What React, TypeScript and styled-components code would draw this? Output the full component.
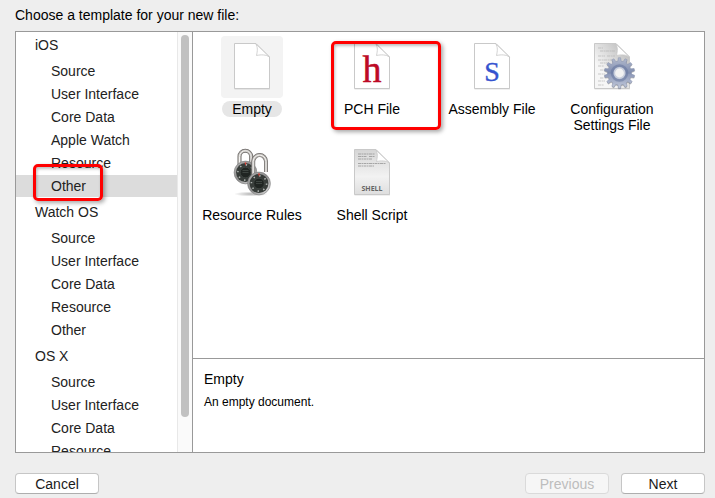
import React from "react";
import styled, { createGlobalStyle, css } from "styled-components";

const GlobalStyle = createGlobalStyle`
  * { box-sizing: border-box; }
  body {
    margin: 0;
    background: #eeeeee;
    color: #000;
    font: 14px/16px "Liberation Sans", Arial, sans-serif;
  }
`;

const Dialog = styled.main`
  display: flex;
  flex-direction: column;
  height: 100vh;
  padding: 7px 10px 4px 15px;
`;

const Title = styled.h1`
  margin: 0 0 8px;
  font-size: 14px;
  line-height: 16px;
  font-weight: 400;
`;

const Panel = styled.div`
  display: flex;
  flex: 1;
  min-height: 0;
  border: 1px solid #999;
  background: #fff;
`;

const Sidebar = styled.nav`
  display: flex;
  flex: none;
  width: 177px;
  overflow: hidden;
  border-right: 1px solid #999;
`;

const Groups = styled.div`
  display: flex;
  flex: 1;
  flex-direction: column;
  gap: 1px;
  color: #222;
`;

const GroupName = styled.h2`
  margin: 0;
  padding: 0 0 2px 19px;
  font-size: 14px;
  line-height: 26px;
  font-weight: 400;
`;

const GroupList = styled.ul`
  margin: 0;
  padding: 0;
  list-style: none;
`;

const GroupItem = styled.li`
  position: relative;
  padding-bottom: 1px;
`;

const Category = styled.button<{ $selected?: boolean }>`
  display: block;
  width: 100%;
  height: 22px;
  padding: 0 0 0 35px;
  border: 0;
  background: ${(p) => (p.$selected ? "#dcdcdc" : "transparent")};
  color: inherit;
  font: inherit;
  text-align: left;
`;

const ScrollTrack = styled.div`
  flex: none;
  width: 15px;
  padding: 3px 3px 35px;
  border-left: 1px solid #e8e8e8;
  background: #fafafa;
`;

const ScrollThumb = styled.div`
  width: 8px;
  height: 100%;
  border-radius: 4px;
  background: #c1c1c1;
`;

const Content = styled.section`
  display: flex;
  flex: 1;
  flex-direction: column;
  min-width: 0;
`;

const Templates = styled.div`
  display: grid;
  flex: 1;
  grid-template-columns: repeat(auto-fill, 120px);
  align-content: start;
  gap: 8px 0;
  padding-top: 4px;
`;

const Cell = styled.div`
  position: relative;
  padding-right: 2px;
`;

const Template = styled.button`
  display: flex;
  flex-direction: column;
  align-items: center;
  gap: 3px;
  width: 100%;
  padding: 0 0 1px;
  border: 0;
  background: none;
  color: #000;
  font: inherit;
`;

const IconTile = styled.span<{ $selected?: boolean }>`
  display: block;
  width: 62px;
  height: 62px;
  border-radius: 4px;
  background: ${(p) => (p.$selected ? "#f3f3f3" : "transparent")};
  svg { display: block; }
`;

const Label = styled.span<{ $selected?: boolean }>`
  min-width: 60px;
  padding: 0 8px;
  border-radius: 9px;
  background: ${(p) => (p.$selected ? "#e6e6e6" : "transparent")};
`;

const markPlace = {
  category: css`
    top: -11px;
    left: 17px;
    width: 70px;
    height: 37px;
  `,
  template: css`
    top: 5px;
    left: 18px;
    width: 110px;
    height: 89px;
  `,
};

const Mark = styled.span<{ $on: "category" | "template" }>`
  position: absolute;
  z-index: 1;
  border: 3px solid #ff0000;
  border-radius: 5px;
  box-shadow: 2px 2px 4px rgba(0, 0, 0, 0.35), inset 1px 2px 3px rgba(0, 0, 0, 0.25);
  pointer-events: none;
  ${(p) => markPlace[p.$on]}
`;

const Detail = styled.div`
  flex: none;
  height: 94px;
  padding: 12px 11px;
  border-top: 1px solid #999;
`;

const DetailTitle = styled.h2`
  margin: 0 0 7px;
  font-size: 14px;
  line-height: 16px;
  font-weight: 400;
`;

const DetailText = styled.p`
  margin: 0;
  font-size: 12px;
  line-height: 16px;
`;

const Footer = styled.footer`
  display: flex;
  gap: 12px;
  padding-top: 20px;
`;

const Button = styled.button<{ $first?: boolean }>`
  width: 84px;
  height: 21px;
  padding: 0;
  border: 1px solid #c6c6c6;
  border-bottom-color: #aeaeae;
  border-radius: 4px;
  background: #fff;
  color: #1a1a1a;
  font: inherit;
  line-height: 18px;
  margin-right: ${(p) => (p.$first ? "auto" : "0")};
  &:disabled {
    border-color: #dadada;
    background: #f6f6f6;
    color: #bdbdbd;
  }
`;

function Page({ fill = "#fff", id }: { fill?: string; id: string }) {
  return (
    <>
      <defs>
        <linearGradient id={id} x1="0" y1="1" x2="1" y2="0">
          <stop offset="0.45" stopColor="#fff" />
          <stop offset="1" stopColor="#bdbdbd" />
        </linearGradient>
      </defs>
      <path d="M13.5 8H35L49 21.5V53.5H13.5Z" fill="#000" opacity="0.12" />
      <path d="M13.5 7.5H35L48.5 21V52.5H13.5Z" fill={fill} stroke="#c9c9c9" />
      <path d="M34.5 7.500C37 11 36.5 15 35.5 19.5C40 18.5 45 18.5 48.5 21Z" fill={`url(#${id})`} stroke="#c6c6c6" strokeWidth="0.8" />
    </>
  );
}

const Svg = ({ children }: { children: React.ReactNode }) => (
  <svg width="62" height="62" viewBox="0 0 62 62" aria-hidden="true">{children}</svg>
);

const EmptyIcon = () => <Svg><Page id="fold-empty" /></Svg>;

const HeaderIcon = () => (
  <Svg>
    <Page id="fold-h" />
    <text x="31" y="46" textAnchor="middle" fontFamily="Liberation Serif, serif" fontSize="38" fill="#bd0a26" stroke="#bd0a26" strokeWidth="0.5">h</text>
  </Svg>
);

const AssemblyIcon = () => (
  <Svg>
    <Page id="fold-s" />
    <text x="31" y="45" textAnchor="middle" fontFamily="Liberation Serif, serif" fontSize="28" fill="#3453cf" stroke="#3453cf" strokeWidth="0.4">S</text>
  </Svg>
);

const TEETH = 14;
const gearPath = Array.from({ length: TEETH }, (_, i) => {
  const step = (Math.PI * 2) / TEETH;
  const points = [[-0.3, 12], [-0.17, 15.3], [0.17, 15.3], [0.3, 12]];
  return points
    .map(([t, r], j) => {
      const a = (i + t) * step;
      return `${i + j === 0 ? "M" : "L"}${(38.5 + r * Math.sin(a)).toFixed(2)} ${(37 - r * Math.cos(a)).toFixed(2)}`;
    })
    .join("");
}).join("") + "ZM43 37A4.5 4.5 0 1 0 34 37A4.5 4.5 0 1 0 43 37Z";

const ConfigIcon = () => (
  <Svg>
    <defs>
      <linearGradient id="config-page" x1="0" y1="1" x2="1" y2="0">
        <stop offset="0.3" stopColor="#f6f6f6" />
        <stop offset="1" stopColor="#b4b4b4" />
      </linearGradient>
      <linearGradient id="gear" x1="0" y1="0" x2="0" y2="1">
        <stop offset="0" stopColor="#b4bccf" />
        <stop offset="0.5" stopColor="#7f8cae" />
        <stop offset="0.55" stopColor="#8f9bba" />
        <stop offset="1" stopColor="#c2c9da" />
      </linearGradient>
    </defs>
    <Page id="fold-config" fill="url(#config-page)" />
    <path d="M17 12h5M19 15h15M17 20h7m2 0h8M17 24h14M19 27h9M17 30h6M19 34h5M17 38h7M19 42h4M17 45h7M17 49h6" stroke="#b4b4b4" strokeWidth="0.7" strokeDasharray="3 0.6 2 0.4" />
    <path d={gearPath} transform="translate(0 1)" fill="#000" opacity="0.25" fillRule="evenodd" />
    <path d={gearPath} fill="url(#gear)" stroke="#8791ab" strokeWidth="0.5" fillRule="evenodd" />
    <circle cx="38.5" cy="37" r="7.5" fill="none" stroke="#66769e" strokeWidth="2.5" opacity="0.55" />
    <circle cx="38.5" cy="37" r="5.2" fill="#f2f2f2" stroke="#c9cfdd" strokeWidth="1.6" />
  </Svg>
);

function Padlock({ x, y, shackle }: { x: number; y: number; shackle: string }) {
  return (
    <g>
      <path d={shackle} fill="none" stroke="#6d6a68" strokeWidth="4" />
      <path d={shackle} fill="none" stroke="#bcb9b5" strokeWidth="2.6" />
      <path d={shackle} fill="none" stroke="#f4f3f1" strokeWidth="1" />
      <circle cx={x} cy={y} r="11.4" fill="url(#metal)" stroke="#777" strokeWidth="0.6" />
      <circle cx={x} cy={y} r="9.4" fill="#373c39" />
      <circle cx={x} cy={y} r="7.6" fill="none" stroke="#b3b8b5" strokeWidth="1.6" strokeDasharray="1.4 4.569" />
      <circle cx={x} cy={y} r="5.3" fill="#202522" stroke="#454c48" strokeWidth="0.7" />
      <path d={`M${x - 3} ${y - 2}h6M${x - 3} ${y}h6`} stroke="#454c48" strokeWidth="0.8" />
      <path d={`M${x - 1} ${y - 10}h2l-1 3z`} fill="#e33b2f" />
    </g>
  );
}

const LocksIcon = () => (
  <Svg>
    <defs>
      <linearGradient id="metal" x1="0" y1="0" x2="1" y2="1">
        <stop offset="0" stopColor="#b5b5b5" />
        <stop offset="0.5" stopColor="#8c8c8c" />
        <stop offset="1" stopColor="#ececec" />
      </linearGradient>
      <radialGradient id="floor">
        <stop offset="0" stopColor="#000" stopOpacity="0.3" />
        <stop offset="1" stopColor="#000" stopOpacity="0" />
      </radialGradient>
    </defs>
    <ellipse cx="30" cy="52" rx="17" ry="2.5" fill="url(#floor)" />
    <Padlock x={24.5} y={30.5} shackle="M18.5 24V14.5A5.8 5.8 0 0 1 30.1 14.5V22" />
    <Padlock x={38} y={41.5} shackle="M32.2 34V19.5A6.4 6.4 0 0 1 45 19.5V30" />
  </Svg>
);

const ShellIcon = () => (
  <Svg>
    <defs>
      <linearGradient id="shell-page" x1="0" y1="0" x2="0" y2="1">
        <stop offset="0" stopColor="#d5d5d5" />
        <stop offset="0.6" stopColor="#f2f2f2" />
        <stop offset="1" stopColor="#dedede" />
      </linearGradient>
    </defs>
    <Page id="fold-shell" fill="url(#shell-page)" />
    <path d="M17 12h17M17 14.5h9m2 0h6M17 17h14M17 21.5h28M17 24h16" stroke="#969696" strokeWidth="0.8" strokeDasharray="3 0.5 1.5 0.5" />
    <text x="31" y="49" textAnchor="middle" fontFamily="Open Sans, sans-serif" fontWeight="700" fontSize="7" fill="#666">SHELL</text>
  </Svg>
);

const groups = [
  { name: "iOS", items: ["Source", "User Interface", "Core Data", "Apple Watch", "Resource", "Other"], selected: "Other" },
  { name: "Watch OS", items: ["Source", "User Interface", "Core Data", "Resource", "Other"] },
  { name: "OS X", items: ["Source", "User Interface", "Core Data", "Resource"] },
];

const templates = [
  { name: "Empty", Icon: EmptyIcon, selected: true },
  { name: "PCH File", Icon: HeaderIcon, marked: true },
  { name: "Assembly File", Icon: AssemblyIcon },
  { name: "Configuration Settings File", Icon: ConfigIcon },
  { name: "Resource Rules", Icon: LocksIcon },
  { name: "Shell Script", Icon: ShellIcon },
];

export default function App() {
  return (
    <>
      <GlobalStyle />
      <Dialog>
        <Title>Choose a template for your new file:</Title>
        <Panel>
          <Sidebar aria-label="Template categories">
            <Groups>
              {groups.map((group) => (
                <div key={group.name}>
                  <GroupName>{group.name}</GroupName>
                  <GroupList>
                    {group.items.map((item) => (
                      <GroupItem key={item}>
                        <Category type="button" $selected={item === group.selected}>{item}</Category>
                        {item === group.selected && <Mark $on="category" />}
                      </GroupItem>
                    ))}
                  </GroupList>
                </div>
              ))}
            </Groups>
            <ScrollTrack><ScrollThumb /></ScrollTrack>
          </Sidebar>
          <Content>
            <Templates>
              {templates.map(({ name, Icon, selected, marked }) => (
                <Cell key={name}>
                  <Template type="button" aria-pressed={!!selected}>
                    <IconTile $selected={selected}><Icon /></IconTile>
                    <Label $selected={selected}>{name}</Label>
                  </Template>
                  {marked && <Mark $on="template" />}
                </Cell>
              ))}
            </Templates>
            <Detail>
              <DetailTitle>Empty</DetailTitle>
              <DetailText>An empty document.</DetailText>
            </Detail>
          </Content>
        </Panel>
        <Footer>
          <Button type="button" $first>Cancel</Button>
          <Button type="button" disabled>Previous</Button>
          <Button type="button">Next</Button>
        </Footer>
      </Dialog>
    </>
  );
}
